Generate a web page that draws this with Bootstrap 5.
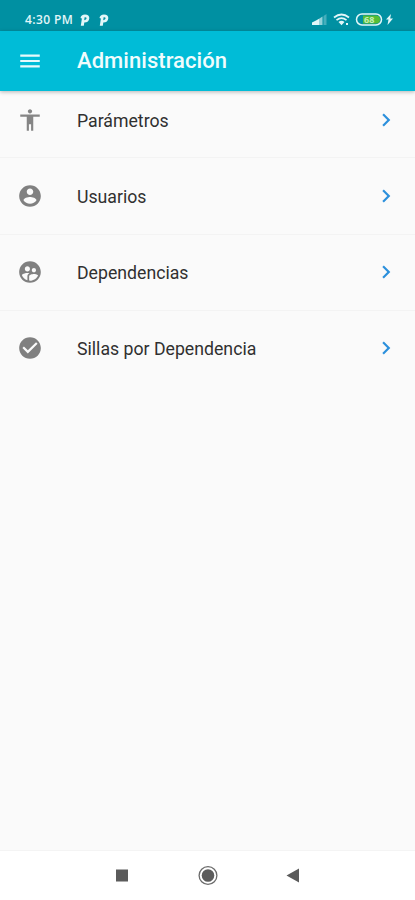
<!DOCTYPE html>
<html lang="es">
<head>
<meta charset="utf-8">
<meta name="viewport" content="width=device-width, initial-scale=1">
<title>Administración</title>
<link href="https://cdn.jsdelivr.net/npm/bootstrap@5.3.0/dist/css/bootstrap.min.css" rel="stylesheet">
<style>
body{font-family:Roboto,"Liberation Sans",sans-serif;background:#fafafa;color:#303030}
svg{display:block;flex:none}
.status-bar{height:31px;background:#0090a2;color:#e2f6f8;padding:8px 21px 0 25px}
.clock{font:600 12px/24px "Open Sans",sans-serif;width:54px;white-space:nowrap;letter-spacing:.4px}
.app-bar{height:60px;background:#00bcd7;box-shadow:0 1px 4px rgba(0,0,0,.28);padding:0 17px;z-index:1}
.app-title{font-size:22px;font-weight:500;line-height:28px;margin-left:34px;color:#f0fcfd;letter-spacing:.05px}
.menu-item{height:76px;padding:0 16px 1px 17px;border-bottom:1px solid #f3f3f3;color:inherit}
.menu-item:first-child{height:67px;padding-bottom:8px}
.menu-item:nth-child(2){height:77px}
.menu-item:last-child{height:75px;border:0}
.menu-label{font-size:17.7px;line-height:24px;margin-left:34px;padding-top:2px}
.nav-keys{height:50px;background:#fff;border-top:1px solid #f4f4f4}
</style>
<script src="https://cdn.jsdelivr.net/npm/bootstrap@5.3.0/dist/js/bootstrap.bundle.min.js"></script>
</head>
<body class="vh-100 d-flex flex-column overflow-hidden">
<header class="status-bar d-flex align-items-center justify-content-between">
  <div class="d-flex align-items-center">
    <div class="clock">4:30 PM</div>
    <svg width="31" height="14" viewBox="0 0 31 14" fill="currentColor" fill-rule="evenodd"><path d="M1.500 5Q2 1.500 6 1.500Q10.500 1.500 10.300 5.300Q10 9.500 5.300 9.600L4.800 12.800H1.800L2.900 5.500ZM5.600 4.300L5.200 7.200Q7.600 7 7.600 5.300Q7.600 4 5.600 4.300ZM20.500 5Q21 1.500 25 1.500Q29.500 1.500 29.300 5.300Q29 9.500 24.300 9.600L23.800 12.800H20.800L21.900 5.500ZM24.600 4.300L24.200 7.200Q26.600 7 26.600 5.300Q26.600 4 24.600 4.300Z"/></svg>
  </div>
  <svg width="83" height="16" viewBox="311 12 83 16" fill="currentColor">
    <path d="M312 25v-2.500l4-2V25zM316 25v-4.500l3.500-2V25z"/><path d="M319.500 25v-6.500l3-2V25z" opacity=".65"/><path d="M323.500 25v-9l3-2V25z" opacity=".3"/>
    <g fill="none" stroke="currentColor" stroke-width="1.700"><path d="M334 17.500q7.500-6 15 0M336.500 20.200q5-4 10 0"/></g><path d="M338.500 22q3-2.300 6 0l-3 3.300zM346 23h2v2h-2z"/>
    <rect x="356.500" y="14" width="25" height="11" rx="5.500" fill="none" stroke="currentColor" stroke-width="1.500"/>
    <path d="M363 15.500h13a4 4 0 0 1 0 8h-13z" fill="#55bd35"/>
    <text x="364" y="23" font-family="Open Sans,sans-serif" font-size="9" font-weight="700" fill="#c4efb8">68</text>
    <path d="M391 14l-5 5.500h2.500l-1 5.500 5.500-6.500h-2.800z"/>
  </svg>
</header>
<nav class="app-bar d-flex align-items-center position-relative flex-shrink-0">
  <svg width="26" height="26" viewBox="0 0 24 24" fill="#e6fafc"><path d="M3 18h18v-2H3v2zm0-5h18v-2H3v2zm0-7v2h18V6H3z"/></svg>
  <h1 class="app-title mb-0">Administración</h1>
</nav>
<main class="flex-grow-1">
  <a class="menu-item d-flex align-items-center text-decoration-none" href="#">
    <svg width="26" height="26" viewBox="0 0 24 24" fill="#858585"><path d="M12 2c1.100 0 2 .9 2 2s-.9 2-2 2-2-.9-2-2 .9-2 2-2zm9 7h-6v13h-2v-6h-2v6H9V9H3V7h18v2z"/></svg>
    <span class="menu-label">Parámetros</span>
    <svg class="ms-auto" width="26" height="26" viewBox="0 0 24 24" fill="#2c90dc"><path d="M10 6 8.590 7.410 13.170 12l-4.580 4.590L10 18l6-6z"/></svg>
  </a>
  <a class="menu-item d-flex align-items-center text-decoration-none" href="#">
    <svg width="26" height="26" viewBox="0 0 24 24" fill="#808080"><path d="M12 2C6.480 2 2 6.480 2 12s4.480 10 10 10 10-4.480 10-10S17.520 2 12 2zm0 3c1.660 0 3 1.340 3 3s-1.340 3-3 3-3-1.340-3-3 1.340-3 3-3zm0 14.200c-2.500 0-4.710-1.280-6-3.220.03-1.990 4-3.080 6-3.080 1.990 0 5.970 1.090 6 3.080-1.290 1.940-3.500 3.220-6 3.220z"/></svg>
    <span class="menu-label">Usuarios</span>
    <svg class="ms-auto" width="26" height="26" viewBox="0 0 24 24" fill="#2c90dc"><path d="M10 6 8.590 7.410 13.170 12l-4.580 4.590L10 18l6-6z"/></svg>
  </a>
  <a class="menu-item d-flex align-items-center text-decoration-none" href="#">
    <svg width="26" height="26" viewBox="0 0 24 24" fill="#808080"><path d="M11.990 2c-5.520 0-10 4.480-10 10s4.480 10 10 10 10-4.480 10-10-4.480-10-10-10zm3.610 6.340c1.070 0 1.930.86 1.930 1.930 0 1.070-.86 1.930-1.930 1.930-1.070 0-1.930-.86-1.930-1.930-.01-1.070.86-1.930 1.930-1.930zm-6-1.580c1.300 0 2.360 1.060 2.360 2.360 0 1.300-1.060 2.360-2.360 2.360s-2.360-1.060-2.360-2.360c0-1.310 1.050-2.360 2.360-2.360zm0 9.130v3.750c-2.400-.75-4.300-2.600-5.140-4.960 1.050-1.120 3.670-1.690 5.140-1.690.53 0 1.200.08 1.900.22-1.640.87-1.900 2.020-1.900 2.680zM11.990 20c-.27 0-.53-.01-.79-.04v-4.070c0-1.420 2.940-2.130 4.400-2.130 1.070 0 2.920.39 3.840 1.150-1.170 2.970-4.060 5.090-7.450 5.090z"/></svg>
    <span class="menu-label">Dependencias</span>
    <svg class="ms-auto" width="26" height="26" viewBox="0 0 24 24" fill="#2c90dc"><path d="M10 6 8.590 7.410 13.170 12l-4.580 4.590L10 18l6-6z"/></svg>
  </a>
  <a class="menu-item d-flex align-items-center text-decoration-none" href="#">
    <svg width="26" height="26" viewBox="0 0 24 24" fill="#808080"><path d="M12 2C6.480 2 2 6.480 2 12s4.480 10 10 10 10-4.480 10-10S17.520 2 12 2zm-2 15-5-5 1.410-1.410L10 14.170l7.590-7.590L19 8l-9 9z"/></svg>
    <span class="menu-label">Sillas por Dependencia</span>
    <svg class="ms-auto" width="26" height="26" viewBox="0 0 24 24" fill="#2c90dc"><path d="M10 6 8.590 7.410 13.170 12l-4.580 4.590L10 18l6-6z"/></svg>
  </a>
</main>
<footer class="nav-keys d-flex justify-content-center flex-shrink-0">
  <svg width="200" height="49" viewBox="108 851 200 49" fill="#5b5b5b"><path d="M116 869.500h12v12h-12zM299 868.500v14l-12.500-7z"/><circle cx="208" cy="875.500" r="6.300"/><circle cx="208" cy="875.500" r="8.900" fill="none" stroke="#6b6b6b" stroke-width="1.300"/></svg>
</footer>
</body>
</html>
